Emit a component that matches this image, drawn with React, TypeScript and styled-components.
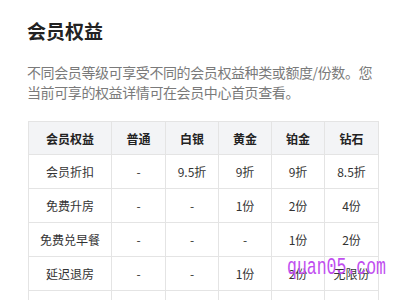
import React from "react";
import styled, { createGlobalStyle } from "styled-components";

const Global = createGlobalStyle`
  html, body { margin: 0; padding: 0; background: #fff; overflow: hidden; }
  body { font-family: "Noto Sans CJK SC", "Liberation Sans", sans-serif; }
`;

const Page = styled.div`
  position: relative;
  width: 400px;
  height: 300px;
  padding: 16px 28px 0 27px;
  box-sizing: border-box;
  overflow: hidden;
`;

const Title = styled.h1`
  margin: 0;
  font-size: 19px;
  line-height: 30px;
  font-weight: 700;
  color: #222;
`;

const Intro = styled.p`
  margin: 16px -12px 0 0;
  font-size: 14px;
  letter-spacing: -0.4px;
  line-height: 20px;
  color: #7a7a7a;
`;

const Table = styled.table`
  margin: 19px 0 0 1px;
  width: 344px;
  border-collapse: collapse;
  table-layout: fixed;
  font-size: 12px;
  color: #333;
`;

const Th = styled.th<{ $w: number }>`
  width: ${(p) => p.$w}px;
  height: 32px;
  padding: 0;
  background: #f3f4f6;
  border: 1px solid #e4e4e4;
  font-weight: 700;
  color: #222;
  text-align: center;
`;

const Td = styled.td`
  height: 33px;
  padding: 0;
  border: 1px solid #e4e4e4;
  text-align: center;
`;

const Watermark = styled.div`
  position: absolute;
  left: 287px;
  top: 254px;
  font-family: "Liberation Mono", "DejaVu Sans Mono", monospace;
  font-size: 16.5px;
  color: #c04ef0;
  transform: scaleY(1.45);
  transform-origin: left top;
  pointer-events: none;
`;

const widths = [82, 53, 52, 52, 52, 53];
const heads = ["会员权益", "普通", "白银", "黄金", "铂金", "钻石"];
const rows = [
  ["会员折扣", "-", "9.5折", "9折", "9折", "8.5折"],
  ["免费升房", "-", "-", "1份", "2份", "4份"],
  ["免费兑早餐", "-", "-", "-", "1份", "2份"],
  ["延迟退房", "-", "-", "1份", "2份", "无限份"],
  ["提前入住", "-", "-", "1份", "2份", "4份"],
];

export default function App() {
  return (
    <Page>
      <Global />
      <Title>会员权益</Title>
      <Intro>不同会员等级可享受不同的会员权益种类或额度/份数。您当前可享的权益详情可在会员中心首页查看。</Intro>
      <Table>
        <thead>
          <tr>
            {heads.map((h, i) => (
              <Th key={h} $w={widths[i]}>{h}</Th>
            ))}
          </tr>
        </thead>
        <tbody>
          {rows.map((r) => (
            <tr key={r[0]}>
              {r.map((c, i) => (
                <Td key={i}>{c}</Td>
              ))}
            </tr>
          ))}
        </tbody>
      </Table>
      <Watermark>quan05.com</Watermark>
    </Page>
  );
}
